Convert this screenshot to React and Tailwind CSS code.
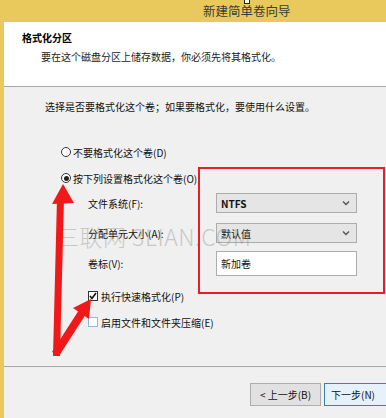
import React from "react";

const Chevron = () => (
  <svg width="8" height="6" viewBox="0 0 8 6" className="text-[#555]">
    <polyline points="1,1.5 4,4.5 7,1.5" fill="none" stroke="currentColor" strokeWidth="1.4" />
  </svg>
);

function Select({ value, bold }) {
  return (
    <div className="w-[141px] h-[20px] border border-[#acacac] bg-[#e5e5e5] flex items-center justify-between pl-[4px] pr-[6px]">
      <span className={`text-[10px] text-[#111] ${bold ? "font-semibold" : ""}`}>{value}</span>
      <Chevron />
    </div>
  );
}

function Radio({ checked, label }) {
  return (
    <div className="flex items-center h-[14px] pl-[57px]">
      <div className="w-[10px] h-[10px] rounded-full border border-[#333] bg-white flex items-center justify-center">
        {checked && <div className="w-[5px] h-[5px] rounded-full bg-[#222]" />}
      </div>
      <span className="ml-[2px] text-[10px] text-[#111]">{label}</span>
    </div>
  );
}

function Check({ checked, label }) {
  return (
    <div className="flex items-center h-[14px] pl-[84px]">
      {checked ? (
        <div className="w-[10px] h-[10px] border border-[#333] bg-white flex items-center justify-center">
          <svg width="8" height="8" viewBox="0 0 8 8">
            <polyline points="1,4 3,6.5 7,1" fill="none" stroke="#111" strokeWidth="1.6" />
          </svg>
        </div>
      ) : (
        <div className="w-[10px] h-[10px] border border-[#8ab9e3] bg-white" />
      )}
      <span className="ml-[3px] text-[10px] text-[#111]">{label}</span>
    </div>
  );
}

export default function App() {
  return (
    <div className="relative w-[386px] h-[418px] overflow-hidden bg-[#e9c95b] pl-[4px] font-['Noto_Sans_CJK_SC',sans-serif]">
      {/* title bar */}
      <div className="h-[22px] flex items-center pl-[199px] text-[12.5px] text-[#3a3a3a]">
        新建简单卷向导
      </div>
      <div className="absolute left-[244px] top-[-1px] w-[6px] h-[5px] border border-[#222] bg-white" />

      {/* header */}
      <div className="h-[65px] bg-white border-b border-[#a7a7a7] pl-[18px] pt-[9px]">
        <div className="text-[10px] leading-[14px] font-bold text-black">格式化分区</div>
        <div className="mt-[5px] pl-[19px] text-[10px] leading-[14px] text-[#222]">
          要在这个磁盘分区上储存数据，你必须先将其格式化。
        </div>
      </div>

      {/* body */}
      <div className="h-[280px] bg-[#f0f0f0] border-b border-[#a7a7a7] pt-[13px]">
        <div className="pl-[41px] text-[10px] leading-[14px] text-[#111]">
          选择是否要格式化这个卷；如果要格式化，要使用什么设置。
        </div>

        <div className="mt-[31px]">
          <Radio label="不要格式化这个卷(D)" />
        </div>
        <div className="mt-[12px]">
          <Radio checked label="按下列设置格式化这个卷(O):" />
        </div>

        <div className="mt-[8px] flex items-center pl-[84px]">
          <span className="w-[128px] text-[10px] text-[#111]">文件系统(F):</span>
          <Select value="NTFS" bold />
        </div>
        <div className="mt-[10px] flex items-center pl-[84px]">
          <span className="w-[128px] text-[10px] text-[#111]">分配单元大小(A):</span>
          <Select value="默认值" />
        </div>
        <div className="mt-[8px] flex items-center pl-[84px]">
          <span className="w-[128px] text-[10px] text-[#111]">卷标(V):</span>
          <div className="w-[141px] h-[25px] border border-[#abadb3] bg-white flex items-center pl-[4px] text-[10px] text-[#111]">
            新加卷
          </div>
        </div>

        <div className="mt-[13px]">
          <Check checked label="执行快速格式化(P)" />
        </div>
        <div className="mt-[12px]">
          <Check label="启用文件和文件夹压缩(E)" />
        </div>
      </div>

      {/* footer */}
      <div className="h-[51px] bg-[#f0f0f0] pt-[16px] pl-[246px] flex items-start gap-[3px]">
        <button className="w-[71px] h-[23px] shrink-0 border border-[#adadad] bg-[#e1e1e1] text-[10px] text-[#111]">
          &lt; 上一步(B)
        </button>
        <button className="w-[76px] h-[23px] shrink-0 border border-[#3c7fb1] bg-[#e5f1fb] text-[10px] text-[#111] text-left pl-[6px]">
          下一步(N)
        </button>
      </div>

      {/* watermark */}
      <div className="absolute left-[56px] top-[219px] text-[23px] font-light text-[#8c8c8c] opacity-40 pointer-events-none whitespace-nowrap tracking-[0.5px]">
        三联网 3LIAN.COM
      </div>

      {/* annotations */}
      <div className="absolute left-[198px] top-[167px] w-[187px] h-[127px] border-2 border-[#ec1c24] pointer-events-none" />
      <svg className="absolute left-0 top-0 pointer-events-none" width="386" height="418" viewBox="0 0 386 418">
        <polygon points="53,356 60,356 64,198 57,198" fill="#f01818" />
        <polygon points="63,184 52,204 74,203" fill="#f01818" />
        <polygon points="52,352 59,356 86,314 79,310" fill="#f01818" />
        <polygon points="91,299 73,308 89,319" fill="#f01818" />
      </svg>
    </div>
  );
}
